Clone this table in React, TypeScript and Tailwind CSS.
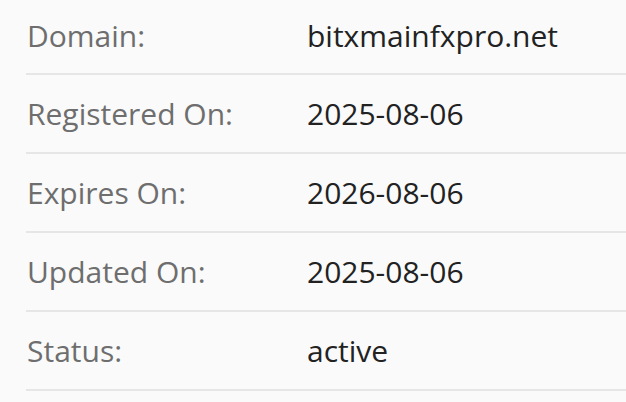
import React from "react";

const rows = [
  { label: "Domain:", value: "bitxmainfxpro.net" },
  { label: "Registered On:", value: "2025-08-06" },
  { label: "Expires On:", value: "2026-08-06" },
  { label: "Updated On:", value: "2025-08-06" },
  { label: "Status:", value: "active" },
];

const App: React.FC = () => {
  return (
    <div
      className="w-[626px] h-[402px] overflow-hidden bg-[#fafafa] pl-[26px]"
      style={{ fontFamily: '"Open Sans", sans-serif' }}
    >
      {rows.map((row, i) => (
        <div
          key={row.label}
          className={`flex items-center border-b-2 border-[#e6e6e6] ${
            i === 0 ? "h-[75px] pb-[2px]" : "h-[79px]"
          }`}
        >
          <span className="w-[281px] pl-px text-[30px] text-[#6e6e6e]">
            {row.label}
          </span>
          <span className="text-[30px] text-[#222222]">{row.value}</span>
        </div>
      ))}
    </div>
  );
};

export default App;
